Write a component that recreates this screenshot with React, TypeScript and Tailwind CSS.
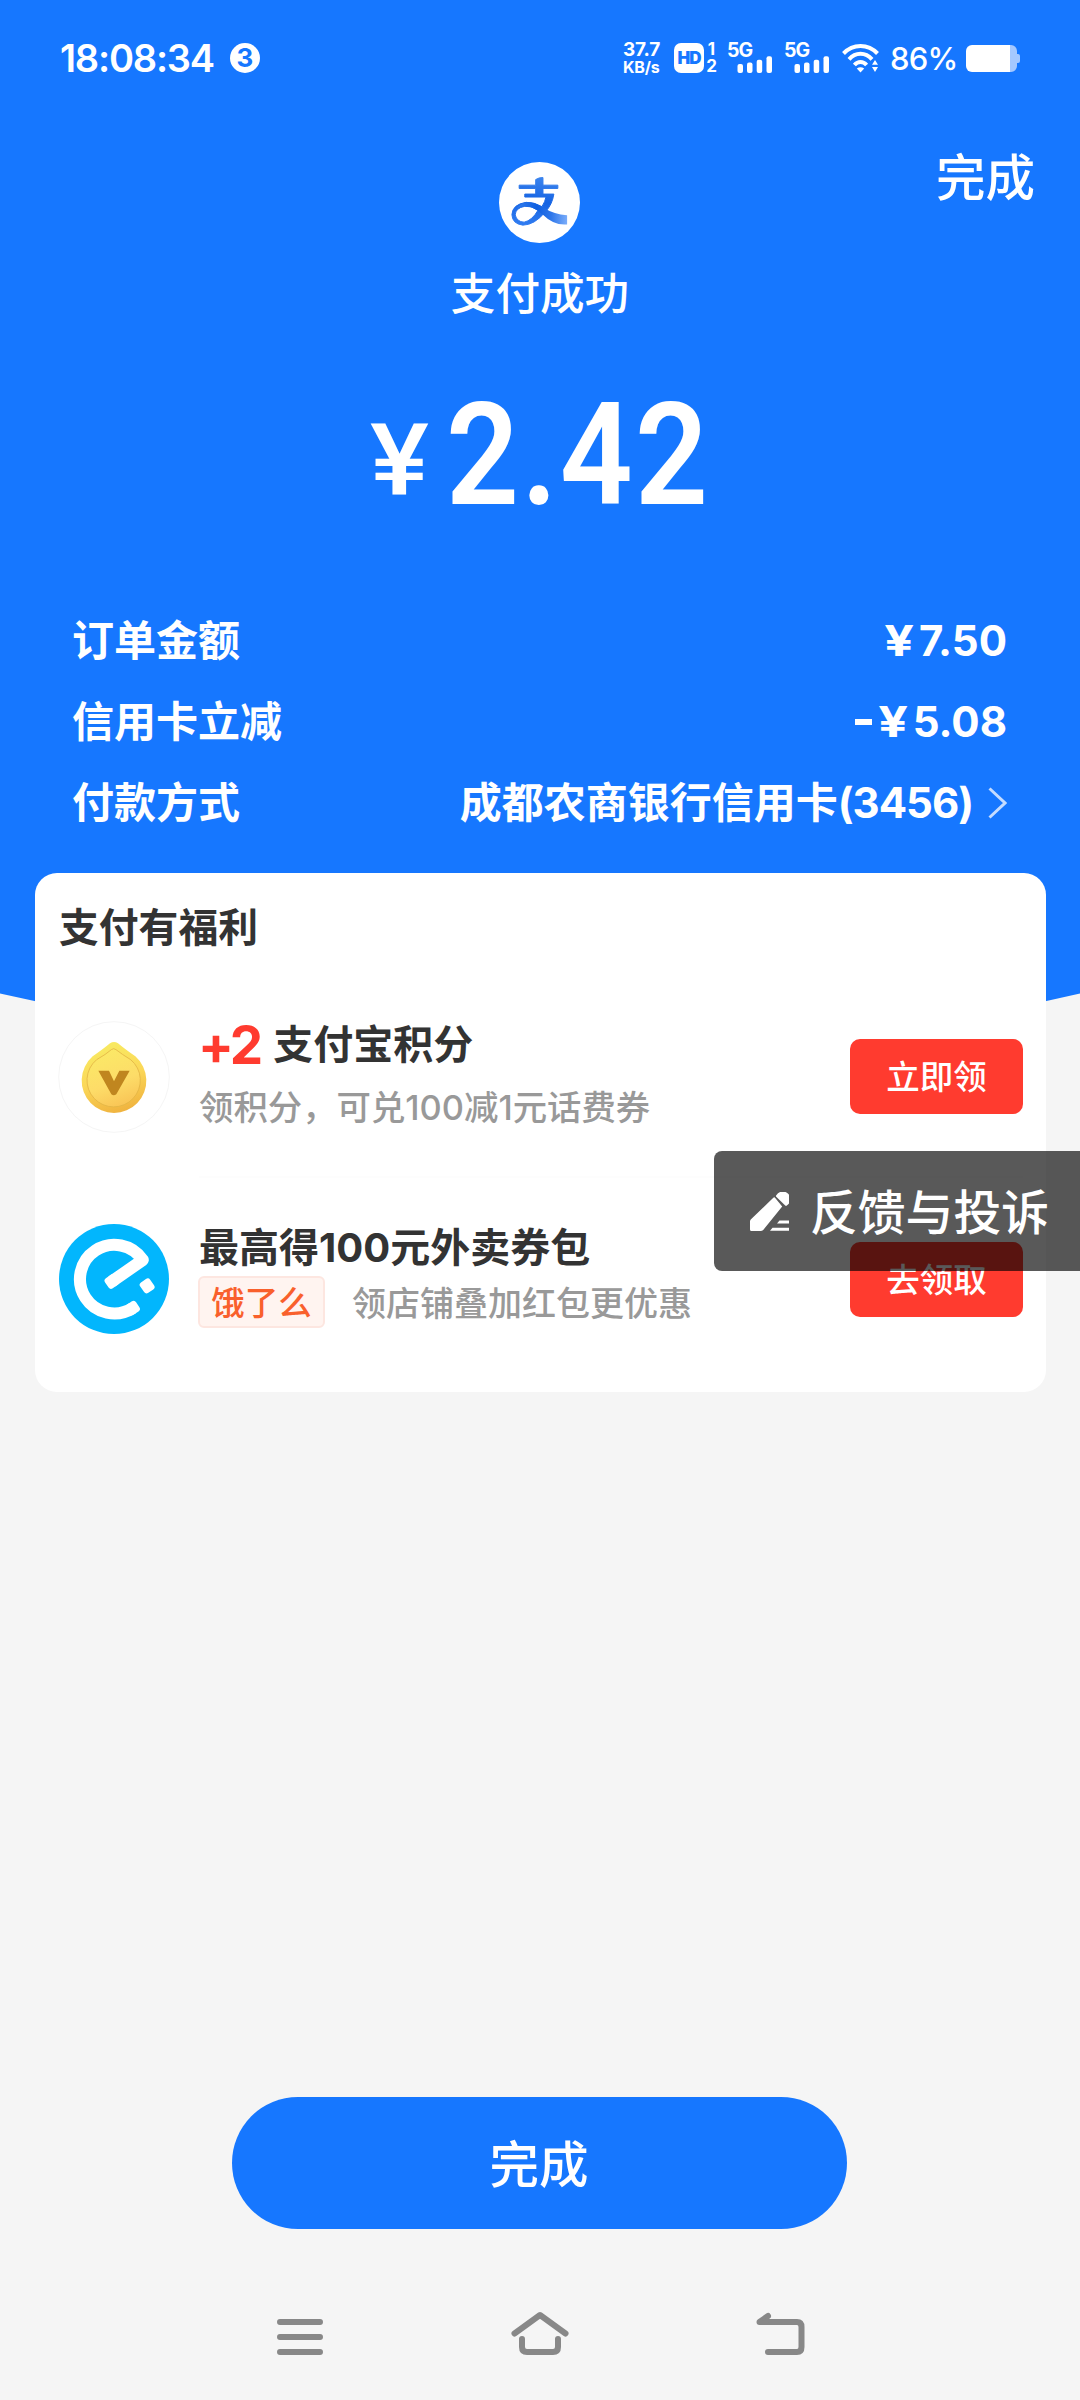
import type { ReactNode } from 'react'
import { clsx } from 'clsx'

interface DetailRow {
  label: string
  value: ReactNode
  link?: boolean
}

const details: DetailRow[] = [
  { label: '订单金额', value: <Price amount="7.50" /> },
  { label: '信用卡立减', value: <Price amount="5.08" negative /> },
  { label: '付款方式', value: <>成都农商银行信用卡<span className="tracking-[-1px]">(3456)</span></>, link: true },
]

function Price({ amount, negative = false }: { amount: string; negative?: boolean }) {
  return (
    <span className="flex items-center">
      {negative && <span className="mr-[12px] h-[6px] w-[17px] bg-white" />}
      <span className="mr-[5px] origin-right scale-x-[1.24]">¥</span>
      <span>{amount}</span>
    </span>
  )
}

function SignalIcon() {
  return (
    <div className="relative h-[30px] w-[45px]">
      <span className="absolute left-[-1px] top-0 text-[19.500px] font-bold leading-[15px] tracking-[-1px]">5G</span>
      <svg className="absolute bottom-0 right-0" width="36" height="17" viewBox="0 0 36 17" fill="currentColor">
        <rect x="0.5" y="8" width="5.5" height="9" rx="2" />
        <rect x="10" y="6.5" width="5.5" height="10.5" rx="2" />
        <rect x="19.7" y="3.7" width="5.5" height="13.3" rx="2" />
        <rect x="29.5" y="0.3" width="5.5" height="16.7" rx="2" />
      </svg>
    </div>
  )
}

function WifiIcon() {
  return (
    <svg width="38" height="30" viewBox="0 0 38 30" fill="none" stroke="currentColor" strokeWidth="4">
      <path d="M1.5 10.5 C11 0.5 26 0.5 35.5 10.5" />
      <path d="M7 16.3 C13.5 9 23.5 9 30 16.3" />
      <path d="M12.4 22 C16 18 21 18 24.6 22" />
      <path d="M14.8 25.4 Q18.5 23 22.2 25.4 L18.5 29.5 Z" fill="currentColor" stroke="none" />
      <path d="M30 21.8 L33 17 L36 21.8 Z M30 24 H36 L33 29 Z" fill="currentColor" stroke="none" />
    </svg>
  )
}

function BatteryIcon() {
  return (
    <svg width="54" height="27" viewBox="0 0 54 27">
      <path d="M44 0 h1 a6 6 0 0 1 6 6 v3 h1 a2 2 0 0 1 2 2 v5 a2 2 0 0 1 -2 2 h-1 v3 a6 6 0 0 1 -6 6 h-1 z" fill="#a5c8ff" />
      <path d="M6 0 H44 V27 H6 a6 6 0 0 1 -6 -6 V6 a6 6 0 0 1 6 -6 z" fill="#fff" />
    </svg>
  )
}

function StatusBar() {
  return (
    <div className="flex h-[116px] items-center pl-[60px] pr-[60px]">
      <span className="text-[38px] font-semibold leading-none tracking-[-1.2px]">18:08:34</span>
      <span className="ml-[16px] flex size-[30px] items-center justify-center rounded-full bg-white text-[26px] font-bold leading-none text-[#1677ff]">
        3
      </span>
      <div className="ml-auto flex items-center">
        <div className="w-[41px] text-[19px] font-bold leading-[18px] tracking-[-0.2px]">
          <div>37.7</div>
          <div className="text-[16px] leading-[16px]">KB/s</div>
        </div>
        <div className="ml-[10px] flex size-[30px] items-center justify-center rounded-[7px] bg-white text-[17px] font-black leading-none tracking-[-1px] text-[#1677ff]">
          HD
        </div>
        <div className="ml-[2px] w-[11px] text-center text-[17px] font-bold leading-[17px]">
          <div>1</div>
          <div>2</div>
        </div>
        <div className="ml-[11px] flex gap-[12px]">
          <SignalIcon />
          <SignalIcon />
        </div>
        <div className="ml-[12px]">
          <WifiIcon />
        </div>
        <span className="ml-[10px] w-[65px] whitespace-nowrap text-[31px] font-medium leading-none tracking-[-0.8px]">86%</span>
        <div className="ml-[11px]">
          <BatteryIcon />
        </div>
      </div>
    </div>
  )
}

function AlipayLogo() {
  return (
    <svg width="81" height="81" viewBox="26 29 245 245" fill="none">
      <defs>
        <linearGradient id="ribbon" x1="60" y1="200" x2="235" y2="210" gradientUnits="userSpaceOnUse">
          <stop offset="0" stopColor="#3d86f2" />
          <stop offset="0.45" stopColor="#0f5fe0" />
          <stop offset="0.7" stopColor="#2d76ea" />
          <stop offset="1" stopColor="#7fb0fb" />
        </linearGradient>
        <linearGradient id="stem" x1="150" y1="76" x2="130" y2="220" gradientUnits="userSpaceOnUse">
          <stop offset="0" stopColor="#3b84ee" />
          <stop offset="0.5" stopColor="#1563e3" />
          <stop offset="1" stopColor="#2f7bf0" />
        </linearGradient>
      </defs>
      <circle cx="148.500" cy="151.500" r="122.500" fill="#fff" />
      <path d="M137 82 Q148 75 159 76 V99 H204 V109 H159 V126 H192 Q187 158 166 180 Q133 220 98 220 Q66 216 65 188 Q67 157 108 151 Q132 150 156 164 Q166 148 168 135 H104 V126 H137 V109 H87 V99 H137 Z M144 175 Q122 160 104 163 Q76 168 75 189 Q80 210 102 211 Q126 206 144 175 Z" fill="url(#stem)" stroke="url(#stem)" strokeWidth="3" strokeLinejoin="round" fillRule="evenodd" />
      <path d="M108 151 Q132 150 160 167 Q192 188 232 190 V218 Q192 222 158 188 Q130 163 104 163 Q92 162 80 170 Q90 154 108 151 Z" fill="url(#ribbon)" />
    </svg>
  )
}

function PointsIcon() {
  return (
    <svg width="112" height="112" viewBox="24 18 336 336" fill="none">
      <defs>
        <linearGradient id="coin" x1="150" y1="90" x2="210" y2="290" gradientUnits="userSpaceOnUse">
          <stop offset="0" stopColor="#f8ea62" />
          <stop offset="0.5" stopColor="#fbd858" />
          <stop offset="1" stopColor="#f0b440" />
        </linearGradient>
        <linearGradient id="face" x1="150" y1="100" x2="215" y2="275" gradientUnits="userSpaceOnUse">
          <stop offset="0" stopColor="#fbea66" />
          <stop offset="0.6" stopColor="#fddc68" />
          <stop offset="1" stopColor="#f9c455" />
        </linearGradient>
      </defs>
      <circle cx="192" cy="186" r="166" fill="#fff" stroke="#f5f5f5" strokeWidth="3" />
      <path d="M180 85 Q192 77 204 85 Q224 102 256 124 A97 97 0 1 1 128 124 Q160 102 180 85 Z" fill="url(#coin)" />
      <path d="M184 104 Q191 98 198 104 Q216 118 242 134 A80 80 0 1 1 140 134 Q168 118 184 104 Z" fill="url(#face)" stroke="#e2b545" strokeWidth="2.5" />
      <path d="M145 167 H177 L192 199 L208 167 H239 L199 238 Q191 244 184 238 Z" fill="#c0861f" />
    </svg>
  )
}

function ElemeIcon() {
  return (
    <svg width="110" height="110" viewBox="27 627 327 327" fill="none">
      <circle cx="190.500" cy="790.500" r="163.500" fill="#02b6fd" />
      <path d="M184 798 L276 734 A102 102 0 1 0 246 877" stroke="#fff" strokeWidth="36" strokeLinejoin="round" />
      <rect x="-18" y="-18" width="36" height="36" rx="9" fill="#fff" transform="translate(184 798) rotate(-35)" />
      <rect x="-18" y="-18" width="36" height="36" rx="9" fill="#fff" transform="translate(246 877) rotate(-33)" />
      <rect x="-18" y="-19" width="36" height="38" rx="9" fill="#fff" transform="translate(289 811) rotate(-35)" />
    </svg>
  )
}

function OfferButton({ children }: { children: ReactNode }) {
  return (
    <button className="ml-auto flex h-[75px] w-[173px] items-center justify-center rounded-[10px] bg-[#ff3b2f] pt-[2px] text-[33.500px] font-medium text-white">
      {children}
    </button>
  )
}

function OfferRow({ icon, action, bordered = false, children }: { icon: ReactNode; action: string; bordered?: boolean; children: ReactNode }) {
  return (
    <div className="flex h-[202px] items-center pl-[23px] pr-[23px]">
      <div className="flex w-[112px] shrink-0 justify-center">{icon}</div>
      <div className={clsx('ml-[29px] flex h-full flex-1 items-center', bordered && 'border-b-2 border-[#fdfdfd]')}>
        {children}
        <OfferButton>{action}</OfferButton>
      </div>
    </div>
  )
}

function BenefitsCard() {
  return (
    <section className="relative mx-[35px] h-[519px] w-[1011px] rounded-[22px] bg-white text-[#333]">
      <h2 className="h-[103px] pl-[24px] pt-[35px] text-[39.800px] font-bold leading-[40px]">支付有福利</h2>
      <OfferRow icon={<PointsIcon />} action="立即领" bordered>
        <div className="pb-[4px]">
          <div className="ml-[-1px] flex h-[50px] items-center text-[40px] font-bold leading-none">
            <span className="mr-[13px] text-[53px] tracking-[-3px] text-[#ff3b2f]">+2</span>
            支付宝积分
          </div>
          <div className="mt-[18px] h-[40px] text-[34.400px] font-medium leading-[40px] text-[#999]">领积分，可兑100减1元话费券</div>
        </div>
      </OfferRow>
      <OfferRow icon={<ElemeIcon />} action="去领取">
        <div className="pb-[7px]">
          <div className="h-[50px] text-[40px] font-bold leading-[50px]">最高得100元外卖券包</div>
          <div className="mt-[3px] flex h-[52px] items-center">
            <span className="ml-[-1px] flex h-[52px] w-[127px] items-center justify-center rounded-[6px] border-2 border-[#fde6e0] bg-[#fff4f0] pt-[4px] text-[33.500px] font-medium leading-none text-[#f9602c]">
              饿了么
            </span>
            <span className="ml-[27px] pt-[4px] text-[34px] font-medium leading-none text-[#999]">领店铺叠加红包更优惠</span>
          </div>
        </div>
      </OfferRow>
    </section>
  )
}

function FeedbackTab() {
  return (
    <div className="absolute right-0 top-[1151px] flex h-[120px] w-[366px] items-center rounded-l-[8px] bg-black/65 pl-[36px] text-white">
      <svg width="39" height="39" viewBox="0 0 39 39" fill="currentColor">
        <path d="M24.800 5.600 L32.200 14.500 L13.200 38 Q12.200 39 10.500 39 H1.500 Q0 39 0 37.500 V29.500 Q0 28.200 1 27.200 L23.300 5.800 Q24.100 5 24.800 5.600 Z" />
        <path d="M26.300 3.200 A7.600 7.600 0 1 1 36.800 13.600 Q36 14.300 35.200 13.500 L26.200 4.700 Q25.500 4 26.300 3.200 Z" />
        <path d="M29.500 28.500 H39 V31.500 H27 Z M22.500 35.800 H39 V38.800 H20 Z" />
      </svg>
      <span className="ml-[21px] whitespace-nowrap pt-[5px] text-[47.800px] font-medium leading-none">反馈与投诉</span>
    </div>
  )
}

function NavBar() {
  return (
    <nav className="flex h-[89px] items-start pl-[277px] text-[#888]">
      <svg width="46" height="44" viewBox="0 0 46 44" stroke="currentColor" strokeWidth="6" strokeLinecap="round">
        <path d="M3 11 H43 M3 26 H43 M3 41 H43" />
      </svg>
      <svg className="ml-[188px]" width="58" height="44" viewBox="0 0 58 44" fill="none" stroke="currentColor" strokeWidth="6" strokeLinecap="round" strokeLinejoin="round">
        <path d="M3.500 22.500 L29 4 L54.500 22.500" />
        <path d="M11 28 V36 Q11 41 16 41 H42 Q47 41 47 36 V28" />
      </svg>
      <svg className="ml-[187px]" width="49" height="44" viewBox="0 0 49 44" fill="none" stroke="currentColor" strokeWidth="6" strokeLinecap="round" strokeLinejoin="round">
        <path d="M12 41 H41 Q45.500 41 45.500 36 V16 Q45.500 11 41 11 H3.500 L12 5" />
        <path d="M3.500 11 L12 5 V11 Z" fill="currentColor" strokeWidth="2" />
      </svg>
    </nav>
  )
}

export default function App() {
  return (
    <div className="relative flex h-[2400px] w-[1080px] flex-col overflow-hidden bg-[#f5f5f5] font-[Inter,'Noto_Sans_CJK_SC',sans-serif]">
      <header className="flex h-[873px] flex-col bg-[#1677ff] text-white">
        <StatusBar />
        <div className="grid grid-cols-[1fr_auto_1fr] items-start">
          <span />
          <div className="mt-[46px] flex flex-col items-center">
            <AlipayLogo />
            <div className="mt-[29px] h-[44px] text-[44.600px] font-medium leading-none">支付成功</div>
          </div>
          <button className="mr-[45px] mt-[37px] justify-self-end text-[49.500px] font-medium leading-[50px]">完成</button>
        </div>

        {/* Сумма платежа */}
        <div className="mt-[69px] flex h-[142px] items-center pl-[370px] font-[Roboto,sans-serif] font-medium leading-none">
          <span className="mr-[22px] origin-left scale-x-110 pt-[8px] text-[101px]">¥</span>
          <span className="origin-left scale-x-90 text-[142px] font-semibold tracking-[2.5px]">2.42</span>
        </div>

        {/* Детали заказа */}
        <div className="mt-[73px] pl-[72px] pr-[73px] text-[42px] font-bold leading-none">
          {details.map((row) => (
            <div key={row.label} className="flex h-[81px] items-center justify-between">
              <span>{row.label}</span>
              <span className="flex items-center">
                {row.value}
                {row.link && (
                  <svg className="ml-[15px]" width="19" height="32" viewBox="0 0 19 32" fill="none" stroke="#c5dcff" strokeWidth="3">
                    <path d="M1.500 1.500 L17 16 L1.500 30.500" />
                  </svg>
                )}
              </span>
            </div>
          ))}
        </div>
      </header>

      <div className="relative">
        <svg className="absolute left-0 top-0" width="1080" height="190" viewBox="0 0 1080 190">
          <path d="M0 0 H1080 V120.500 Q540 245 0 120.500 Z" fill="#1677ff" />
        </svg>
        <BenefitsCard />
      </div>

      <button className="mb-[82px] ml-[232px] mt-auto flex h-[132px] w-[615px] items-center justify-center rounded-full bg-[#1677ff] pt-[5px] pr-[1px] text-[49.500px] font-medium text-white">
        完成
      </button>
      <NavBar />

      <FeedbackTab />
    </div>
  )
}
